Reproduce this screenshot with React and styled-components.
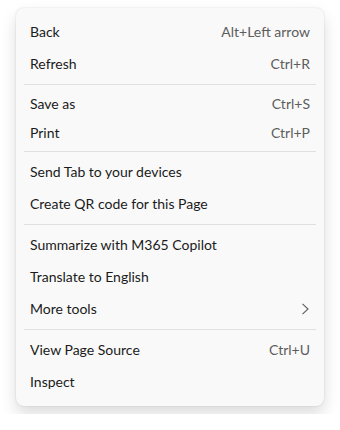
import React from 'react';
import styled, { createGlobalStyle } from 'styled-components';

const GlobalStyle = createGlobalStyle`
  html, body {
    margin: 0;
    padding: 0;
    background: #ffffff;
  }
  body {
    font-family: Lato, "Liberation Sans", sans-serif;
    -webkit-font-smoothing: antialiased;
  }
`;

const Page = styled.div`
  padding: 8px 16px;
`;

const Menu = styled.div`
  width: 308px;
  box-sizing: border-box;
  padding: 8px 0;
  background: #f9f9f9;
  border-radius: 8px;
  box-shadow: 0 8px 16px rgba(0, 0, 0, 0.14), 0 0 2px rgba(0, 0, 0, 0.14);
  display: flex;
  flex-direction: column;
`;

const Group = styled.div`
  display: flex;
  flex-direction: column;
`;

const Row = styled.div`
  display: flex;
  align-items: center;
  justify-content: space-between;
  box-sizing: border-box;
  height: ${(p) => (p.$compact ? '29px' : '32px')};
  padding: 0 14px 1px;
  font-size: 14px;
  color: #1b1b1b;
  cursor: default;
`;

const Shortcut = styled.span`
  color: #5d5d5d;
`;

const Divider = styled.div`
  height: 1px;
  margin: 4px 8px;
  background: #e0e0e0;
`;

const Chevron = () => (
  <svg width="9" height="12" viewBox="0 0 9 12" fill="none">
    <path d="M1.5 0.8 L7 6 L1.5 11.2" stroke="#5d5d5d" strokeWidth="1.1" />
  </svg>
);

const groups = [
  {
    items: [
      { label: 'Back', shortcut: 'Alt+Left arrow' },
      { label: 'Refresh', shortcut: 'Ctrl+R' },
    ],
  },
  {
    compact: true,
    items: [
      { label: 'Save as', shortcut: 'Ctrl+S' },
      { label: 'Print', shortcut: 'Ctrl+P' },
    ],
  },
  {
    items: [
      { label: 'Send Tab to your devices' },
      { label: 'Create QR code for this Page' },
    ],
  },
  {
    items: [
      { label: 'Summarize with M365 Copilot' },
      { label: 'Translate to English' },
      { label: 'More tools', submenu: true },
    ],
  },
  {
    items: [
      { label: 'View Page Source', shortcut: 'Ctrl+U' },
      { label: 'Inspect' },
    ],
  },
];

export default function App() {
  return (
    <Page>
      <GlobalStyle />
      <Menu>
        {groups.map((group, gi) => (
          <React.Fragment key={gi}>
            {gi > 0 && <Divider />}
            <Group>
              {group.items.map((item) => (
                <Row key={item.label} $compact={group.compact}>
                  <span>{item.label}</span>
                  {item.shortcut && <Shortcut>{item.shortcut}</Shortcut>}
                  {item.submenu && <Chevron />}
                </Row>
              ))}
            </Group>
          </React.Fragment>
        ))}
      </Menu>
    </Page>
  );
}
